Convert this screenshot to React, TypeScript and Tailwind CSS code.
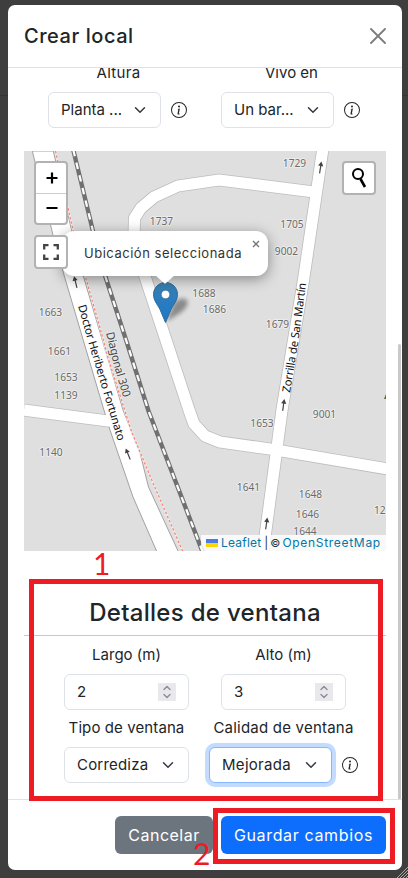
import React from "react";

const houseNumbers: [string, number, number][] = [
  ["1729", 294.5, 167], ["1737", 161.5, 225], ["1705", 292, 228], ["9002", 286.5, 255],
  ["1688", 204, 297], ["1686", 214.5, 313], ["1679", 277.5, 327.5], ["1663", 50.5, 316],
  ["1661", 59.5, 354.5], ["1653", 66, 381], ["1139", 66, 398.5], ["1140", 51, 456],
  ["9001", 324.5, 418], ["1653", 262, 427], ["1641", 248.5, 491], ["1648", 310.5, 497.5],
  ["1646", 307.5, 517.5], ["1644", 305, 535],
];

const roads = [
  "M24 410 L112 421.5",
  "M318 192.500 L219 180 L178 186 L154 197 L141 208 L134.500 218 L134 236 L144.500 275 L189 410 L194 424 L205 436 L220 442 L270 449 L388 469",
  "M322.700 150 L303.500 280 L282 410 L263 552",
];

const mainRoad =
  "M32.300 151 L53 235 L64 275 L103 407 L110 430 L133 497 L157 552 L178.500 552 L148.500 487 L140 453 L123 410 L83 275 L72 232 L53.300 151 Z";
const rail = "M73.300 150 L92.700 230 L105.500 277 L126.700 342 L148.500 411 L170 467 L203 553";

function Arrow({ x, y, r }: { x: number; y: number; r: number }) {
  return (
    <g transform={`translate(${x} ${y}) rotate(${r})`}>
      <path d="M0 6V-3" stroke="#444" strokeWidth="1.2" />
      <path d="M-2.600 -1.500L0 -6L2.600 -1.500Z" fill="#444" />
    </g>
  );
}

function MapTiles() {
  return (
    <svg className="block h-[400px] w-[362px]" viewBox="24 151 362 400">
      <rect x="24" y="151" width="362" height="400" fill="#dfdfdf" />
      <g fill="none" strokeLinejoin="round">
        {roads.map((d) => <path key={d} d={d} stroke="#bdbdbd" strokeWidth="12.800" />)}
        <path d={mainRoad} fill="#fff" stroke="#a2a2a2" strokeWidth="1" />
        {roads.map((d) => <path key={d} d={d} stroke="#fff" strokeWidth="11.200" />)}
        <path d="M55.500 151L66.700 202L73 230L85.500 277L102 335L108 358L131.700 432L153 483L183 552" stroke="#eee" strokeWidth="2" />
        <path d="M55.500 151L66.700 202L73 230L85.500 277L102 335L108 358L131.700 432L153 483L183 552" stroke="#fa8072" strokeWidth="1.200" strokeDasharray="2.500 2" />
        <path d={rail} stroke="#707070" strokeWidth="4.400" />
        <path d={rail} stroke="#fff" strokeWidth="2.200" strokeDasharray="6.500 6.500" />
      </g>
      <g fontFamily="'Noto Sans', sans-serif" fontSize="10.200" fill="#6b6b6b" stroke="#ededed" strokeWidth="2" strokeLinejoin="round" paintOrder="stroke" textAnchor="middle">
        {houseNumbers.map(([n, x, y]) => <text key={n + x} x={x} y={y}>{n}</text>)}
        <text x="374" y="514" textAnchor="start">123</text>
      </g>
      <path d="M386 394v5h-2z" fill="#6e6421" />
      <path id="doctor" d="M78 306L88.500 343L102.500 390L118.500 443" fill="none" />
      <path id="diagonal" d="M106 333L113.500 364L124 400" fill="none" />
      <path id="zorrilla" d="M290 393L299 338L306.500 280" fill="none" />
      <g fontFamily="'Noto Sans', sans-serif" fontSize="11.300" fill="#111">
        <text><textPath href="#doctor" textLength="141" lengthAdjust="spacing">Doctor Heriberto Fortunato</textPath></text>
        <text fill="#444" stroke="#e8e8e8" strokeWidth="2" paintOrder="stroke"><textPath href="#diagonal" textLength="67" lengthAdjust="spacing">Diagonal 300</textPath></text>
        <text><textPath href="#zorrilla" textLength="111" lengthAdjust="spacing">Zorrilla de San Martín</textPath></text>
      </g>
      <Arrow x={75.500} y={282} r={-14} />
      <Arrow x={128} y={454} r={-22} />
      <Arrow x={320.500} y={167.500} r={9} />
      <Arrow x={283.500} y={405} r={8} />
      <Arrow x={266.500} y={523.500} r={8} />
    </svg>
  );
}

function Marker() {
  return (
    <svg className="absolute left-[129px] top-[131px] h-[41px] w-[50px]" viewBox="0 0 50 41">
      <defs>
        <linearGradient id="pin" x1="0" y1="0" x2="0" y2="1">
          <stop offset="0" stopColor="#3a7fae" /><stop offset="1" stopColor="#1a78d0" />
        </linearGradient>
        <filter id="soft" x="-50%" y="-50%" width="200%" height="200%"><feGaussianBlur stdDeviation="2" /></filter>
      </defs>
      <path d="M13 40L21 21Q28 14 34 18Q37 24 27 31Z" fill="#000" opacity=".38" filter="url(#soft)" />
      <path d="M12.500 .500C5.500 .500 .500 6 .500 12.500C.500 18 4 22 7 27.500L12.500 40.500L18 27.500C21 22 24.500 18 24.500 12.500C24.500 6 19.500 .500 12.500 .500Z" fill="url(#pin)" stroke="#2e6c97" />
      <circle cx="12.500" cy="12.500" r="4.300" fill="#fff" stroke="#2e6c97" strokeWidth=".7" />
    </svg>
  );
}

function Info() {
  return (
    <svg className="h-4 w-4 shrink-0" viewBox="0 0 16 16" fill="#212529">
      <path d="M8 15A7 7 0 1 1 8 1a7 7 0 0 1 0 14m0 1A8 8 0 1 0 8 0a8 8 0 0 0 0 16" />
      <path d="m8.930 6.588-2.290.287-.082.380.450.083c.294.070.352.176.288.469l-.738 3.468c-.194.897.105 1.319.808 1.319.545 0 1.178-.252 1.465-.598l.088-.416c-.200.176-.492.246-.686.246-.275 0-.375-.193-.304-.533zM9 4.500a1 1 0 1 1-2 0 1 1 0 0 1 2 0" />
    </svg>
  );
}

function Select({ text, className }: { text: string; className: string }) {
  return (
    <div className={`flex h-9 items-center justify-between rounded-md border bg-white pl-3 pr-[14px] ${className}`}>
      <span className="whitespace-nowrap">{text}</span>
      <svg className="h-3 w-3 shrink-0" viewBox="0 0 16 16" fill="none" stroke="#343a40" strokeWidth="2" strokeLinecap="round" strokeLinejoin="round"><path d="m2 5 6 6 6-6" /></svg>
    </div>
  );
}

function NumberField({ label, value }: { label: string; value: string }) {
  return (
    <div className="flex w-[157px] flex-col items-center">
      <div className="h-[30px] leading-[22px]">{label}</div>
      <div className="flex h-9 w-[125px] items-center justify-between rounded-md border border-[#dee2e6] pl-3 pr-3">
        <span>{value}</span>
        <span className="flex h-[18px] w-[18px] items-center justify-center bg-[#e9e9ed]">
          <svg className="h-4 w-4" viewBox="0 0 16 16" fill="none" stroke="#8f8f9d" strokeWidth="1.500" strokeLinecap="round" strokeLinejoin="round"><path d="m5 5.500 3-3 3 3m-6 5 3 3 3-3" /></svg>
        </span>
      </div>
    </div>
  );
}

export default function App() {
  return (
    <div className="relative h-[878px] w-[408px] overflow-hidden bg-[#3e3e3e] pl-2 pt-[5px] font-['Inter','Liberation_Sans',sans-serif] text-[15px] text-[#212529]">
      <div className="absolute left-0 top-[95px] h-px w-full bg-[#353535]" />
      <div className="relative flex h-[865px] w-[394px] flex-col overflow-hidden rounded-[7px] bg-white">
        <header className="flex h-[63px] shrink-0 items-center justify-between border-b border-[#dee2e6] px-4">
          <h1 className="text-[20px] font-medium tracking-[0.55px]">Crear local</h1>
          <svg className="h-4 w-4" viewBox="0 0 16 16" stroke="#7c7c7c" strokeWidth="1.800" strokeLinecap="round"><path d="m1 1 14 14M15 1 1 15" /></svg>
        </header>
        <main className="relative h-[731px] shrink-0 overflow-hidden px-4">
          <div className="-mt-1.5 flex px-2">
            <div className="w-[173px]">
              <div className="h-[30px] text-center leading-[22px] tracking-[0.3px]">Altura</div>
              <div className="flex items-center gap-2.5 pl-4"><Select text="Planta ..." className="w-[113px] border-[#dee2e6]" /><Info /></div>
            </div>
            <div className="w-[173px]">
              <div className="h-[30px] text-center leading-[22px]">Vivo en</div>
              <div className="flex items-center gap-2.5 pl-4"><Select text="Un bar..." className="w-[113px] border-[#dee2e6]" /><Info /></div>
            </div>
          </div>
          <section className="relative mt-[23px] h-[400px] w-[362px] overflow-hidden">
            <MapTiles />
            <Marker />
            <div className="absolute left-[38px] top-20 h-[45px] w-[206px] rounded-xl bg-white shadow-[0_3px_14px_rgba(0,0,0,0.4)]">
              <span className="absolute left-[22px] top-3 whitespace-nowrap text-[13px] leading-[20px] tracking-[0.52px] text-[#333]">Ubicación seleccionada</span>
              <svg className="absolute right-[8px] top-[9px] h-2 w-2" viewBox="0 0 8 8" stroke="#757575" strokeWidth="1.300"><path d="m1 1 6 6M7 1 1 7" /></svg>
              <svg className="absolute left-[91px] top-[44px] h-[9px] w-6" viewBox="0 0 24 9" fill="#fff"><path d="M2 0h20l-9 8q-1 1-2 0z" /></svg>
            </div>
            <div className="absolute left-2.5 top-2.5 flex h-[64px] w-[34px] flex-col overflow-hidden rounded-[4px] border-2 border-[#b2b2b2] bg-white">
              <div className="flex h-[31px] items-center justify-center border-b border-[#ccc] pl-px"><svg className="h-3 w-3" viewBox="0 0 12 12" stroke="#000" strokeWidth="2.200"><path d="M6 .500v11M.500 6h11" /></svg></div>
              <div className="flex h-[30px] items-center justify-center pl-px"><svg className="h-3 w-3" viewBox="0 0 12 12" stroke="#000" strokeWidth="2.200"><path d="M.500 6h11" /></svg></div>
            </div>
            <div className="absolute left-2.5 top-[84px] flex h-[34px] w-[34px] items-center justify-center rounded-[4px] border-2 border-[#b2b2b2] bg-white">
              <svg className="h-4 w-4" viewBox="0 0 16 16" fill="none" stroke="#444" strokeWidth="2.300"><path d="M1.200 5.500V1.200H5.500M10.500 1.200h4.300v4.300M14.800 10.500v4.300h-4.300M5.500 14.800H1.200v-4.300" /></svg>
            </div>
            <div className="absolute right-2.5 top-2.5 flex h-[34px] w-[34px] items-center justify-center rounded-[4px] border-2 border-[#b2b2b2] bg-white">
              <svg className="h-5 w-4" viewBox="0 0 16 20" fill="none" stroke="#000"><circle cx="7" cy="6" r="5" strokeWidth="2" /><path d="m9.500 11 4.500 8" strokeWidth="2.600" /></svg>
            </div>
            <div className="absolute bottom-0 right-0 flex h-4 w-[185px] items-center whitespace-nowrap bg-white/80 pl-[5px] text-[12px] leading-4 text-[#333]">
              <svg className="mr-[3px] h-2 w-3" viewBox="0 0 12 8"><path fill="#4c7be1" d="M0 0h12v4H0z" /><path fill="#ffd500" d="M0 4h12v4H0z" /></svg>
              <span className="tracking-[0.2px] text-[#0078a8]">Leaflet</span><span className="ml-[3px] mr-[2px]">|</span><span className="mr-[2px] text-[11px]">©</span><span className="tracking-[0.7px] text-[#0078a8]">OpenStreetMap</span>
            </div>
          </section>
          <h2 className="mt-[44px] h-[41px] border-b border-[#c7c8c9] text-center text-[24px] font-medium leading-[35px] tracking-[0.3px]">Detalles de ventana</h2>
          <div className="flex px-6 pt-2">
            <NumberField label="Largo (m)" value="2" /><NumberField label="Alto (m)" value="3" />
          </div>
          <div className="flex px-6 pt-[7px]">
            <div className="w-[157px]">
              <div className="h-[30px] whitespace-nowrap text-center leading-[22px] tracking-[0.1px]">Tipo de ventana</div>
              <Select text="Corrediza" className="ml-4 w-[125px] tracking-[0.2px] border-[#dee2e6]" />
            </div>
            <div className="w-[157px]">
              <div className="h-[30px] whitespace-nowrap text-center leading-[22px] tracking-[0.22px]">Calidad de ventana</div>
              <div className="flex items-center gap-2.5 pl-1"><Select text="Mejorada" className="w-[123px] border-[#86b7fe] tracking-[0.3px] shadow-[0_0_0_4px_#c2dbfe]" /><Info /></div>
            </div>
          </div>
          <div className="absolute bottom-0 right-px h-[455px] w-[3px] rounded-t bg-[#c9c9c9]" />
        </main>
        <footer className="flex h-[71px] items-center justify-end gap-2 border-t border-[#dee2e6] pr-4 text-[16px] text-white">
          <button className="h-[38px] w-[98px] rounded-md bg-[#6c757d] tracking-[0.5px]">Cancelar</button>
          <button className="h-[38px] w-[165px] whitespace-nowrap rounded-md bg-[#0d6efd] tracking-[0.65px]">Guardar cambios</button>
        </footer>
      </div>
      <div className="absolute left-[29px] top-[579px] h-[222px] w-[354px] border-[5px] border-[#ed1c24]" />
      <div className="absolute left-[213px] top-[808px] h-[56px] w-[182px] border-[5px] border-[#ed1c24]" />
      <span className="absolute left-[93px] top-[545px] font-['Lato',sans-serif] text-[30px] leading-[36px] text-[#ed1c24]">1</span>
      <span className="absolute left-[193px] top-[835px] font-['Lato',sans-serif] text-[30px] leading-[36px] text-[#ed1c24]">2</span>
      <svg className="absolute bottom-0 right-0 h-3 w-3" viewBox="0 0 12 12" stroke="#aaa" strokeWidth="1"><path d="M1 12 12 1M4 12l8-8M7 12l5-5M10 12l2-2" /></svg>
    </div>
  );
}
